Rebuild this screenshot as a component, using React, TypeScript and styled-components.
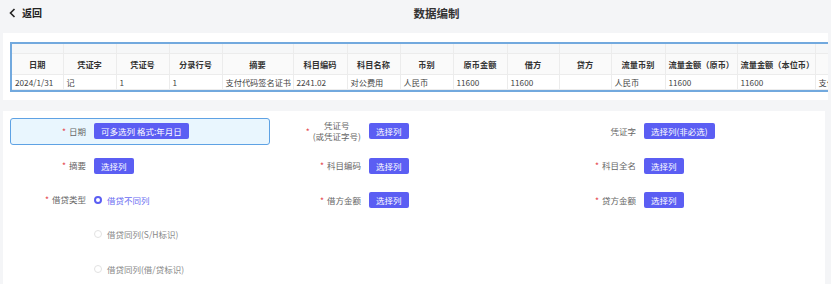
import styled, { createGlobalStyle } from "styled-components";

type CellProps = {
  $head?: boolean;
};

type ItemProps = {
  $active?: boolean;
  $span?: number;
};

type RadioProps = {
  $checked?: boolean;
};

const GlobalStyle = createGlobalStyle`
  html, body {
    margin: 0;
    padding: 0;
    background: #f4f5f7;
    font-family: "Noto Sans CJK SC", "Noto Sans", sans-serif;
    color: #333;
  }
`;

const Page = styled.div`
  width: 831px;
  height: 284px;
  overflow: hidden;
  background: #f4f5f7;
`;

const Header = styled.header`
  display: flex;
  align-items: center;
  height: 25px;
  padding: 0 0 0 9px;
  margin-bottom: 8px;
`;

const BackLink = styled.div`
  display: flex;
  align-items: center;
  gap: 6px;
  width: 33px;
  font-size: 10px;
  font-weight: 700;
  color: #222;
  cursor: pointer;
`;

const PageTitle = styled.h1`
  flex: 1;
  margin: 0;
  text-align: center;
  font-size: 11.5px;
  font-weight: 700;
  color: #333;
`;

const Card = styled.section`
  margin: 0 3px 11px 3px;
  background: #fff;
  padding: 9px 0 8px 7px;
`;

const TableWrap = styled.div`
  border: 2px solid #72a9de;
  border-right: none;
  overflow: hidden;
`;

const Table = styled.table`
  table-layout: fixed;
  border-collapse: collapse;
  width: 888px;
  font-size: 8px;
`;

const TopRow = styled.tr`
  height: 9px;
  background: #f6f7f8;
`;

const HeadRow = styled.tr`
  height: 21px;
  background: #fafafa;
`;

const BodyRow = styled.tr`
  height: 15px;
`;

const Cell = styled.td<CellProps>`
  padding: 0 3px;
  border-left: 1px solid #ececec;
  border-bottom: 1px solid #ececec;
  white-space: nowrap;
  overflow: hidden;
  line-height: 12px;
  text-align: ${props => (props.$head ? "center" : "left")};
  font-weight: ${props => (props.$head ? "700" : "400")};
  color: ${props => (props.$head ? "#333" : "#444")};
  font-size: 8.2px;
  &:first-child {
    border-left: none;
  }
`;

const FormCard = styled.section`
  margin: 0 6px 0 3px;
  background: #fff;
  padding: 7px 0 8px 7px;
  height: 200px;
`;

const FormGrid = styled.div`
  display: grid;
  grid-template-columns: repeat(3, 260px);
  grid-auto-rows: 27px;
  column-gap: 15px;
  row-gap: 7.5px;
`;

const Item = styled.div<ItemProps>`
  display: flex;
  align-items: ${props => (props.$span ? "flex-start" : "center")};
  gap: 8px;
  box-sizing: border-box;
  border: 1.5px solid ${props => (props.$active ? "#5ea2e4" : "transparent")};
  border-radius: 3px;
  background: ${props => (props.$active ? "#e9f6fe" : "transparent")};
  grid-row: ${props => (props.$span ? `span ${props.$span}` : "auto")};
`;

const Label = styled.div`
  width: 75px;
  flex: none;
  display: flex;
  justify-content: flex-end;
  align-items: center;
  font-size: 8.5px;
  line-height: 11px;
  color: #666;
`;

const LabelText = styled.span`
  text-align: center;
`;

const Star = styled.span`
  color: #e5484d;
  margin-right: 3px;
`;

const PickButton = styled.button`
  height: 16px;
  padding: 0 7px;
  border: none;
  border-radius: 2px;
  background: #5b5ef3;
  color: #fff;
  font-family: inherit;
  font-size: 8.5px;
  line-height: 16px;
  cursor: pointer;
`;

const RadioGroup = styled.div`
  display: flex;
  flex-direction: column;
  gap: 10.5px;
`;

const RadioOption = styled.label<RadioProps>`
  display: flex;
  align-items: center;
  gap: 5px;
  height: 24px;
  font-size: 8.5px;
  color: ${props => (props.$checked ? "#6a6df2" : "#888")};
  cursor: pointer;
`;

const RadioDot = styled.span<RadioProps>`
  box-sizing: border-box;
  width: 8px;
  height: 8px;
  border-radius: 50%;
  background: #fff;
  border: ${props => (props.$checked ? "2.5px solid #5b5ef3" : "1px solid #e2e2e2")};
`;

const widths = [51, 53, 53, 53, 71, 54, 53, 53, 54, 52, 52, 54, 72, 78, 85];
const heads = [
  "日期",
  "凭证字",
  "凭证号",
  "分录行号",
  "摘要",
  "科目编码",
  "科目名称",
  "币别",
  "原币金额",
  "借方",
  "贷方",
  "流量币别",
  "流量金额（原币）",
  "流量金额（本位币）",
  "",
];
const row = [
  "2024/1/31",
  "记",
  "1",
  "1",
  "支付代码签名证书",
  "2241.02",
  "对公费用",
  "人民币",
  "11600",
  "11600",
  "",
  "人民币",
  "11600",
  "11600",
  "支付代码签名证书",
];

function Field(props: { label: React.ReactNode; required?: boolean; button: string; active?: boolean }) {
  return (
    <Item $active={props.active}>
      <Label>
        {props.required && <Star>*</Star>}
        <LabelText>{props.label}</LabelText>
      </Label>
      <PickButton>{props.button}</PickButton>
    </Item>
  );
}

function App() {
  return (
    <Page>
      <GlobalStyle />
      <Header>
        <BackLink>
          <svg width="7" height="10" viewBox="0 0 7 10">
            <path d="M5.5 1 L1.5 5 L5.5 9" fill="none" stroke="#222" strokeWidth="1.6" />
          </svg>
          返回
        </BackLink>
        <PageTitle>数据编制</PageTitle>
      </Header>

      <Card>
        <TableWrap>
          <Table>
            <colgroup>
              {widths.map((w, i) => (
                <col key={i} style={{ width: w }} />
              ))}
            </colgroup>
            <tbody>
              <TopRow>
                {widths.map((_, i) => (
                  <Cell key={i} $head />
                ))}
              </TopRow>
              <HeadRow>
                {heads.map((h, i) => (
                  <Cell key={i} $head>
                    {h}
                  </Cell>
                ))}
              </HeadRow>
              <BodyRow>
                {row.map((v, i) => (
                  <Cell key={i}>{v}</Cell>
                ))}
              </BodyRow>
            </tbody>
          </Table>
        </TableWrap>
      </Card>

      <FormCard>
        <FormGrid>
          <Field label="日期" required button="可多选列 格式:年月日" active />
          <Field
            label={
              <>
                凭证号
                <br />
                (或凭证字号)
              </>
            }
            required
            button="选择列"
          />
          <Field label="凭证字" button="选择列(非必选)" />

          <Field label="摘要" required button="选择列" />
          <Field label="科目编码" required button="选择列" />
          <Field label="科目全名" required button="选择列" />

          <Item $span={3}>
            <Label style={{ height: 24 }}>
              <Star>*</Star>
              <LabelText>借贷类型</LabelText>
            </Label>
            <RadioGroup>
              <RadioOption $checked>
                <RadioDot $checked />
                借贷不同列
              </RadioOption>
              <RadioOption>
                <RadioDot />
                借贷同列(S/H标识)
              </RadioOption>
              <RadioOption>
                <RadioDot />
                借贷同列(借/贷标识)
              </RadioOption>
            </RadioGroup>
          </Item>
          <Field label="借方金额" required button="选择列" />
          <Field label="贷方金额" required button="选择列" />
        </FormGrid>
      </FormCard>
    </Page>
  );
}

export default App;
